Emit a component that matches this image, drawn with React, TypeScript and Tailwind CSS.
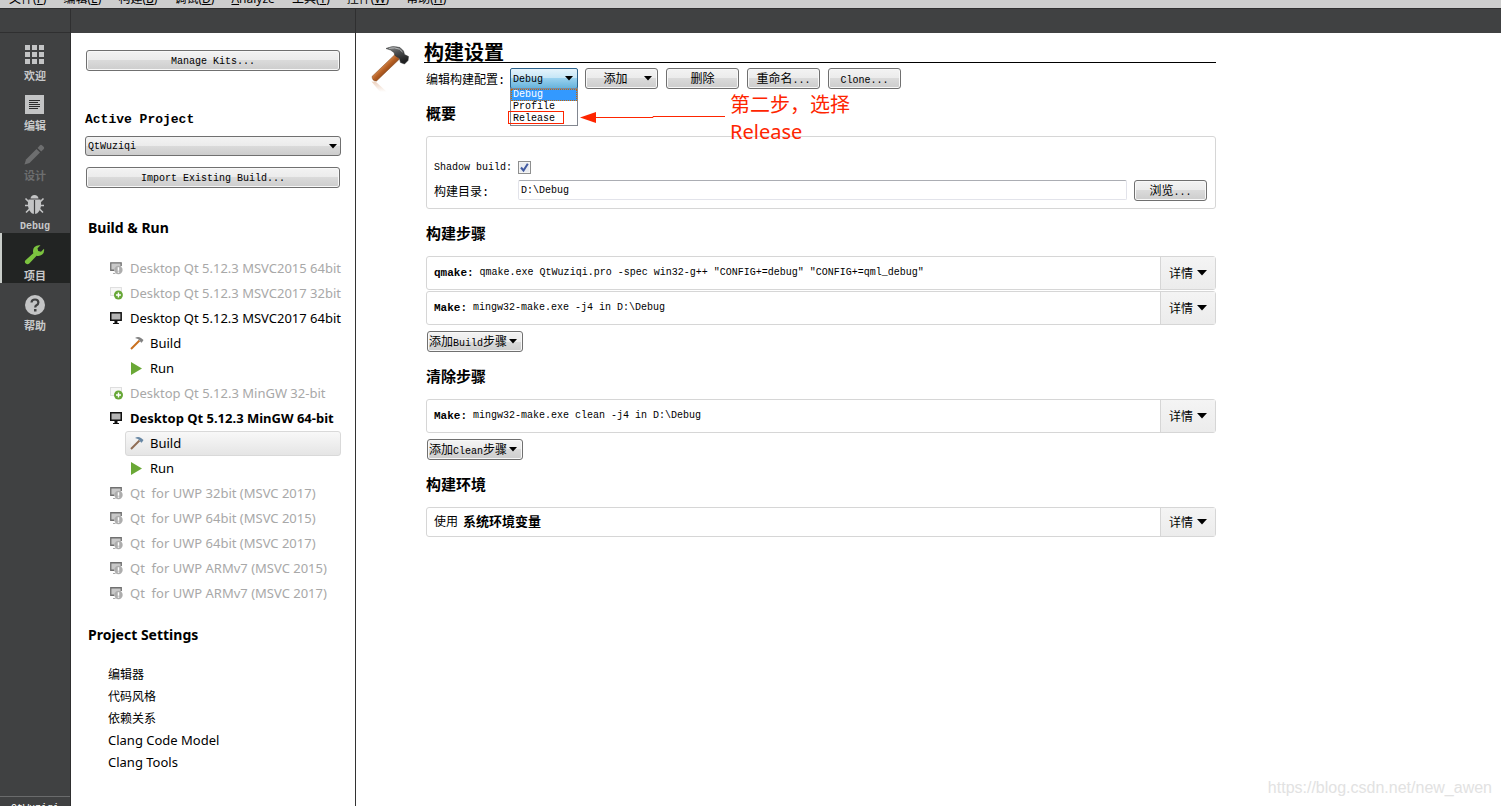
import { useState, type ReactNode } from "react";
import { clsx } from "clsx";

type KitState = "missing" | "addable" | "ready";
type TreeRow = { kind: "kit"; state: KitState; label: string; bold?: boolean } | { kind: "build" | "run"; selected?: boolean };

const menus = [
  ["文件", "F"],
  ["编辑", "E"],
  ["构建", "B"],
  ["调试", "D"],
  ["Analyze", ""],
  ["工具", "T"],
  ["控件", "W"],
  ["帮助", "H"],
];

const treeRows: TreeRow[] = [
  { kind: "kit", state: "missing", label: "Desktop Qt 5.12.3 MSVC2015 64bit" },
  { kind: "kit", state: "addable", label: "Desktop Qt 5.12.3 MSVC2017 32bit" },
  { kind: "kit", state: "ready", label: "Desktop Qt 5.12.3 MSVC2017 64bit" },
  { kind: "build" },
  { kind: "run" },
  { kind: "kit", state: "addable", label: "Desktop Qt 5.12.3 MinGW 32-bit" },
  { kind: "kit", state: "ready", label: "Desktop Qt 5.12.3 MinGW 64-bit", bold: true },
  { kind: "build", selected: true },
  { kind: "run" },
  { kind: "kit", state: "missing", label: "Qt  for UWP 32bit (MSVC 2017)" },
  { kind: "kit", state: "missing", label: "Qt  for UWP 64bit (MSVC 2015)" },
  { kind: "kit", state: "missing", label: "Qt  for UWP 64bit (MSVC 2017)" },
  { kind: "kit", state: "missing", label: "Qt  for UWP ARMv7 (MSVC 2015)" },
  { kind: "kit", state: "missing", label: "Qt  for UWP ARMv7 (MSVC 2017)" },
];

const settingsLinks = [
  { label: "编辑器" },
  { label: "代码风格" },
  { label: "依赖关系" },
  { label: "Clang Code Model", latin: true },
  { label: "Clang Tools", latin: true },
];
const configs = ["Debug", "Profile", "Release"];

function GridIcon() {
  return (
    <svg width="22" height="22" viewBox="0 0 22 22" fill="#c3c4c5">
      {[1, 8, 15].map((y) => [1, 8, 15].map((x) => <rect key={`${x}-${y}`} x={x} y={y} width="5" height="5" />))}
    </svg>
  );
}

function EditIcon() {
  return (
    <svg width="22" height="22" viewBox="0 0 22 22">
      <rect x="1" y="1" width="19" height="19" fill="#c3c4c5" />
      <path d="M5 6.5h11M5 8.5h9M5 10.5h11M5 12.5h11M5 14.5h9" stroke="#2b2c2d" />
    </svg>
  );
}

function PencilIcon() {
  return (
    <svg width="22" height="22" viewBox="0 0 22 22" fill="#6d6e6f">
      <path d="M0.5 20.5 2 15.5 12.5 5 16 8.5 5.5 19Z" />
      <path d="M13.5 4 16 1.2Q17 0.5 18 1.3L19.8 3.1Q20.6 4 19.8 5L17.2 7.6Z" />
    </svg>
  );
}

function BugIcon() {
  return (
    <svg width="22" height="22" viewBox="0 0 22 22">
      <path d="M1.5 4.5 5 8M1 11.5H5M2 18.5 5.5 15M19.5 4.5 16 8M20 11.5H16M19 18.5 15.5 15" stroke="#c3c4c5" strokeWidth="1.6" />
      <path d="M6.5 4.5Q7 1 10.5 1T14.5 4.5Z" fill="#c3c4c5" />
      <path d="M4.5 5.5H16.5Q18 12 15.5 16.5 13.5 20 10.5 20T5.5 16.5Q3 12 4.5 5.5Z" fill="#c3c4c5" />
      <path d="M10.5 6V20" stroke="#404142" strokeWidth="1.2" />
    </svg>
  );
}

function WrenchIcon() {
  return (
    <svg width="22" height="22" viewBox="0 0 22 22">
      <path
        d="M1.5 16.2 9.3 9.2Q8.3 5.5 10.5 3 13 0.6 16.5 1.3L13.5 4.3 14.2 7 17 7.7 20 4.8Q20.7 8.2 18.2 10.6 15.7 12.6 12.6 11.8L5.3 19.6Q3.5 21 1.8 19.6 0 17.8 1.5 16.2Z"
        fill="#7cc33f"
      />
    </svg>
  );
}

function HelpIcon() {
  return (
    <svg width="22" height="22" viewBox="0 0 22 22">
      <circle cx="11" cy="11" r="10" fill="#c3c4c5" />
      <path d="M7.5 8.5Q7.7 5.5 11 5.5T14.4 8.6Q14.4 10.2 12.5 11.2 11.2 12 11.2 13.5" fill="none" stroke="#404142" strokeWidth="2.2" />
      <rect x="10" y="15" width="2.5" height="2.5" fill="#404142" />
    </svg>
  );
}

const modes = [
  { label: "欢迎", icon: <GridIcon /> },
  { label: "编辑", icon: <EditIcon /> },
  { label: "设计", icon: <PencilIcon />, disabled: true },
  { label: "Debug", icon: <BugIcon />, latin: true },
  { label: "项目", icon: <WrenchIcon />, active: true },
  { label: "帮助", icon: <HelpIcon /> },
];

function KitIcon({ state }: { state: KitState }) {
  if (state === "ready") {
    return (
      <svg width="14" height="16" viewBox="0 0 14 16">
        <rect x="0.75" y="1.75" width="10.5" height="7.5" fill="#b4b4b4" stroke="#111" strokeWidth="1.5" />
        <path d="M4.5 10h3v2h1.5v1H3v-1h1.5z" fill="#111" />
      </svg>
    );
  }
  if (state === "addable") {
    return (
      <svg width="14" height="16" viewBox="0 0 14 16">
        <rect x="0.5" y="1.5" width="11" height="8" fill="#f7f7f7" stroke="#dedede" />
        <circle cx="8.5" cy="9" r="4.5" fill="#67a737" />
        <path d="M8.5 6.5v5M6 9h5" stroke="#fff" strokeWidth="1.4" />
      </svg>
    );
  }
  return (
    <svg width="14" height="16" viewBox="0 0 14 16">
      <path d="M0.75 9.25V1.75H11.25V6H6L4 9.25Z" fill="#c9c9c9" />
      <path d="M4.5 9.25H0.75V1.75H11.25V5" fill="none" stroke="#707070" strokeWidth="1.3" />
      <path d="M3 12.5h2.5" stroke="#aaa" />
      <circle cx="8.5" cy="9" r="4.2" fill="#adadad" />
      <path d="M8.5 6.3v3.5M8.5 10.5v1.3" stroke="#fff" strokeWidth="1.5" />
    </svg>
  );
}

function SmallHammer({ muted }: { muted?: boolean }) {
  return (
    <svg width="14" height="16" viewBox="0 0 14 16">
      <path d="M1 13 9.5 4.5" stroke={muted ? "#8f6d55" : "#c9701e"} strokeWidth="2" />
      <path d="M5 2Q8 0.2 11 2L13.5 4 11.7 6.8 10.5 6 10 5 8 3Z" fill={muted ? "#6787a4" : "#828282"} />
    </svg>
  );
}

function BigHammer() {
  return (
    <svg width="40" height="48" viewBox="0 0 40 48">
      <defs>
        <linearGradient id="handle" x1="0" y1="0" x2="1" y2="1">
          <stop offset="0.35" stopColor="#e39a5c" />
          <stop offset="0.5" stopColor="#b55f24" />
          <stop offset="0.7" stopColor="#7a3a12" />
        </linearGradient>
        <linearGradient id="reflection" x1="0" y1="0" x2="0" y2="1">
          <stop offset="0" stopColor="#d9a27c" stopOpacity="0.5" />
          <stop offset="1" stopColor="#d9a27c" stopOpacity="0" />
        </linearGradient>
        <linearGradient id="head" x1="0" y1="0" x2="0.4" y2="1">
          <stop offset="0" stopColor="#8d8f90" />
          <stop offset="0.5" stopColor="#4a4c4d" />
          <stop offset="1" stopColor="#1f2021" />
        </linearGradient>
      </defs>
      <path d="M0.5 36.5 5 37 16 47 9 47Z" fill="url(#reflection)" />
      <path d="M1 31.5 24 9.5 28.5 14 5.5 36Q1.5 36.5 1 31.5Z" fill="url(#handle)" stroke="#7c4015" strokeWidth="0.5" />
      <path d="M15 3.5Q21 0 29 2.5L32.5 6 33.5 9.5 37.5 11.5 37 15.5 33.5 19 29.5 17.5 28.5 13.5 24 10.5 23 7.5Q20 4.5 15 3.5Z" fill="url(#head)" stroke="#2b2c2d" strokeWidth="0.5" />
      <path d="M18 3.3Q24 2 28.5 4.2L31.5 7" fill="none" stroke="#b9bbbc" />
    </svg>
  );
}

function Caret({ big }: { big?: boolean }) {
  return big ? (
    <svg width="10" height="6" viewBox="0 0 10 6"><path d="M0 0h10L5 5.5z" /></svg>
  ) : (
    <svg width="8" height="5" viewBox="0 0 8 5"><path d="M0 0h8L4 4.5z" /></svg>
  );
}

function PushButton({ children, caret, className }: { children: ReactNode; caret?: boolean; className?: string }) {
  return (
    <button
      type="button"
      className={clsx(
        "flex h-[21px] items-center whitespace-nowrap rounded-[3px] border border-[#707070] bg-[linear-gradient(#f3f3f3_0%,#ebebeb_50%,#dadada_50%,#cdcdcd_100%)] shadow-[inset_0_0_0_1px_#f8f8f8]",
        className
      )}
    >
      <span className="pt-[3px]">{children}</span>
      {caret && <Caret />}
    </button>
  );
}

function Latin({ children }: { children: ReactNode }) {
  return <span className="text-[10px]">{children}</span>;
}

function SectionTitle({ children }: { children: ReactNode }) {
  return <h2 className="h-[47px] text-[15px] font-bold leading-[53px]">{children}</h2>;
}

function StepRow({ children, short }: { children: ReactNode; short?: boolean }) {
  return (
    <div className={clsx("flex rounded-[3px] border border-[#d6d6d6]", short ? "h-[30px]" : "h-[34px]")}>
      <div className="flex min-w-0 flex-1 items-center whitespace-pre px-[7px] text-[10px]">{children}</div>
      <button
        type="button"
        className="flex w-[55px] items-center justify-center gap-1 border-l border-[#d6d6d6] bg-[linear-gradient(#f4f4f4,#ececec)]"
      >
        <span className="pt-1">详情</span>
        <Caret big />
      </button>
    </div>
  );
}

function ModeBar() {
  return (
    <nav className="flex w-[71px] shrink-0 flex-col border-r border-[#2f2f30] bg-[#404142]">
      {modes.map((mode) => (
        <button
          key={mode.label}
          type="button"
          disabled={mode.disabled}
          className={clsx(
            "flex h-[50px] flex-col items-center gap-[2px] border-l-2 pr-[2px] pt-[11px] font-bold leading-[18px] [&>svg]:shrink-0",
            mode.active ? "border-[#c9cdc9] bg-[#222423]" : "border-transparent",
            mode.disabled ? "text-[#6d6e6f]" : "text-[#c8c9ca]",
            mode.latin ? "text-[10px]" : "text-[11px]"
          )}
        >
          {mode.icon}
          <span>{mode.label}</span>
        </button>
      ))}
      <div className="mt-auto h-[10px] overflow-hidden border-t border-[#6a6b6c] text-center text-[10px] leading-6 text-white">
        QtWuziqi
      </div>
    </nav>
  );
}

function ProjectPanel() {
  return (
    <aside className="w-[285px] shrink-0 border-r border-[#333] px-[14px] pt-[17px] font-['Noto_Sans','Noto_Sans_CJK_SC',sans-serif]">
      <div className="font-['Liberation_Mono','Noto_Sans_CJK_SC',monospace] text-[10px]">
        <PushButton className="mx-px w-[254px] justify-center">Manage Kits...</PushButton>
        <label htmlFor="project" className="mt-[39px] block text-[13px] font-bold leading-5">Active Project</label>
        <div className="relative mt-[6px] flex items-center">
          <select
            id="project"
            className="h-5 w-full appearance-none rounded-[3px] border border-[#707070] bg-[linear-gradient(#f3f3f3_0%,#ebebeb_50%,#dadada_50%,#cdcdcd_100%)] px-[2px] pt-[2px]"
          >
            <option>QtWuziqi</option>
          </select>
          <span className="pointer-events-none absolute right-1"><Caret /></span>
        </div>
        <PushButton className="mx-px mt-[11px] w-[254px] justify-center">Import Existing Build...</PushButton>
      </div>

      <h2 className="mt-[30px] pl-[3px] text-sm font-bold leading-5">Build &amp; Run</h2>
      <ul className="mt-[18px] text-[13px]">
        {treeRows.map((row, idx) =>
          row.kind === "kit" ? (
            <li
              key={idx}
              className={clsx(
                "flex h-[25px] items-center gap-[6px] whitespace-pre pl-[25px]",
                row.state === "ready" ? "text-black" : "text-[#a8a8a8]",
                row.bold && "font-bold"
              )}
            >
              <KitIcon state={row.state} />
              {row.label}
            </li>
          ) : (
            <li
              key={idx}
              className={clsx(
                "ml-10 flex h-[25px] items-center gap-[6px] rounded-[3px] border pl-1",
                row.selected ? "border-[#d9d9d9] bg-[linear-gradient(#f8f8f8,#e5e5e5)]" : "border-transparent"
              )}
            >
              {row.kind === "build" ? (
                <SmallHammer muted={row.selected} />
              ) : (
                <svg width="14" height="16" viewBox="0 0 14 16"><path d="M1 1 12 7.5 1 14Z" fill="#6aa836" /></svg>
              )}
              {row.kind === "build" ? "Build" : "Run"}
            </li>
          )
        )}
      </ul>

      <h2 className="mt-[19px] pl-[3px] text-sm font-bold leading-5">Project Settings</h2>
      <ul className="mt-[18px] pl-[23px]">
        {settingsLinks.map(({ label, latin }) => (
          <li key={label} className={clsx("h-[22px]", latin ? "text-[13px] leading-[22px]" : "text-xs leading-6")}>
            <a href="#">{label}</a>
          </li>
        ))}
      </ul>
    </aside>
  );
}

// Red hints drawn over the configuration drop-down
function Callout() {
  return (
    <>
      <svg className="pointer-events-none absolute left-[82px] top-[43px] z-10" width="218" height="14" viewBox="0 0 218 14">
        <rect x="0.5" y="0.5" width="55" height="12" fill="none" stroke="#fe2500" />
        <path d="M88 6.5H145V5.5H217" fill="none" stroke="#fe2500" />
        <path d="M72 6.5 88 1V12Z" fill="#fe2500" />
      </svg>
      <p className="absolute left-[304px] top-[23px] whitespace-nowrap font-['Noto_Sans','Noto_Sans_CJK_SC',sans-serif] text-xl leading-[27px] text-[#fe2500]">
        第二步，选择
        <br />
        Release
      </p>
    </>
  );
}

function BuildSettings() {
  const [config, setConfig] = useState("Debug");
  const [shadow, setShadow] = useState(true);
  const [dir, setDir] = useState("D:\\Debug");

  return (
    <main className="flex min-w-0 flex-1 items-start pl-[15px]">
      <div className="pt-3"><BigHammer /></div>
      <div className="ml-[13px] w-full max-w-[792px]">
        <h1 className="h-[30px] border-b border-black text-xl font-bold leading-[43px]">构建设置</h1>
        <div className="pl-[2px]">
          <div className="relative mt-[5px] flex h-[21px] items-center gap-[7px]">
            <label htmlFor="config" className="w-[77px] whitespace-nowrap pt-1">编辑构建配置:</label>
            <div className="relative flex items-center text-[10px]">
              <select
                id="config"
                value={config}
                onChange={(e) => setConfig(e.target.value)}
                className="h-[21px] w-[68px] appearance-none rounded-[2px] border border-[#2c628b] bg-[linear-gradient(#e5f4fc_0%,#c4e5f6_50%,#98d1ef_50%,#68b3db_100%)] px-[2px] pt-[2px]"
              >
                {configs.map((name) => <option key={name}>{name}</option>)}
              </select>
              <span className="pointer-events-none absolute right-[5px]"><Caret /></span>
              <ul className="absolute left-0 top-[20px] w-[68px] border border-[#828790] bg-white leading-3">
                {configs.map((name) => (
                  <li
                    key={name}
                    className={clsx(
                      "h-3 px-[2px]",
                      name === config && "bg-[#3399ff] text-white outline-1 -outline-offset-1 outline-dotted outline-[#cc6600]"
                    )}
                  >
                    {name}
                  </li>
                ))}
              </ul>
            </div>
            <div className="flex gap-2">
              <PushButton caret className="w-[73px] justify-center gap-4 pl-3">添加</PushButton>
              <PushButton className="w-[73px] justify-center">删除</PushButton>
              <PushButton className="w-[73px] justify-center">重命名<Latin>...</Latin></PushButton>
              <PushButton className="w-[73px] justify-center"><Latin>Clone...</Latin></PushButton>
            </div>
            <Callout />
          </div>

          <SectionTitle>概要</SectionTitle>
          <div className="h-[73px] rounded-[3px] border border-[#d6d6d6] px-[7px] pt-[19px]">
            <div className="flex h-[23px] items-center">
              <label htmlFor="shadow" className="w-[84px] pt-px text-[10px]">Shadow build:</label>
              <input
                id="shadow"
                type="checkbox"
                checked={shadow}
                onChange={(e) => setShadow(e.target.checked)}
                className="peer size-[13px] appearance-none border border-[#8e8f8f] bg-[#e9ecf0] shadow-[inset_0_0_0_1px_#f4f4f4]"
              />
              <svg className="pointer-events-none invisible -ml-[13px] peer-checked:visible" width="13" height="13" viewBox="0 0 13 13">
                <path d="M3 6.5 5.5 9.5 9.8 2.8" fill="none" stroke="#4059a0" strokeWidth="2" />
              </svg>
            </div>
            <div className="flex h-[23px] items-center">
              <label htmlFor="dir" className="w-[84px] pt-1">构建目录:</label>
              <input
                id="dir"
                value={dir}
                onChange={(e) => setDir(e.target.value)}
                className="mb-[2px] h-5 min-w-0 flex-1 rounded-[2px] border border-[#e2e3ea] border-t-[#abadb3] px-[2px] pt-[2px] text-[10px]"
              />
              <PushButton className="ml-[7px] mr-px w-[73px] justify-center">浏览<Latin>...</Latin></PushButton>
            </div>
          </div>

          <SectionTitle>构建步骤</SectionTitle>
          <div className="flex flex-col gap-px">
            <StepRow>
              <b className="text-[11px]">qmake:</b> qmake.exe QtWuziqi.pro -spec win32-g++ "CONFIG+=debug" "CONFIG+=qml_debug"
            </StepRow>
            <StepRow>
              <b className="text-[11px]">Make:</b> mingw32-make.exe -j4 in D:\Debug
            </StepRow>
          </div>
          <PushButton caret className="ml-px mt-[6px] w-24 gap-[2px] pl-px">添加<Latin>Build</Latin>步骤</PushButton>

          <SectionTitle>清除步骤</SectionTitle>
          <StepRow>
            <b className="text-[11px]">Make:</b> mingw32-make.exe clean -j4 in D:\Debug
          </StepRow>
          <PushButton caret className="ml-px mt-[6px] w-24 gap-[2px] pl-px">添加<Latin>Clean</Latin>步骤</PushButton>

          <SectionTitle>构建环境</SectionTitle>
          <StepRow short>
            <span className="pt-[2px] text-xs">使用</span>
            <b className="ml-[5px] pt-[2px] text-[13px]">系统环境变量</b>
          </StepRow>
        </div>
      </div>
    </main>
  );
}

export default function App() {
  return (
    <div className="relative flex h-screen flex-col overflow-hidden bg-white font-['Liberation_Mono','Noto_Sans_CJK_SC',monospace] text-xs text-black">
      <header className="flex h-[9px] shrink-0 items-end gap-[17px] overflow-hidden border-b border-[#2f2f30] bg-[#cdcdcd] pl-[9px] font-['Noto_Sans','Noto_Sans_CJK_SC',sans-serif] leading-[18px]">
        {menus.map(([label, key]) => (
          <button key={label} type="button" className="whitespace-nowrap">
            {key ? <>{label}(<u>{key}</u>)</> : <><u>A</u>nalyze</>}
          </button>
        ))}
      </header>
      <div className="flex h-6 shrink-0 bg-[#404142]">
        <div className="w-[71px] border-b border-r border-[#2f2f30]" />
        <div className="w-[285px] border-r border-[#2f2f30]" />
      </div>
      <div className="flex min-h-0 flex-1">
        <ModeBar />
        <ProjectPanel />
        <BuildSettings />
      </div>
      <div className="absolute bottom-[6px] right-[9px] font-['Liberation_Sans',sans-serif] text-base text-[#e2e2e2]">
        https://blog.csdn.net/new_awen
      </div>
    </div>
  );
}
